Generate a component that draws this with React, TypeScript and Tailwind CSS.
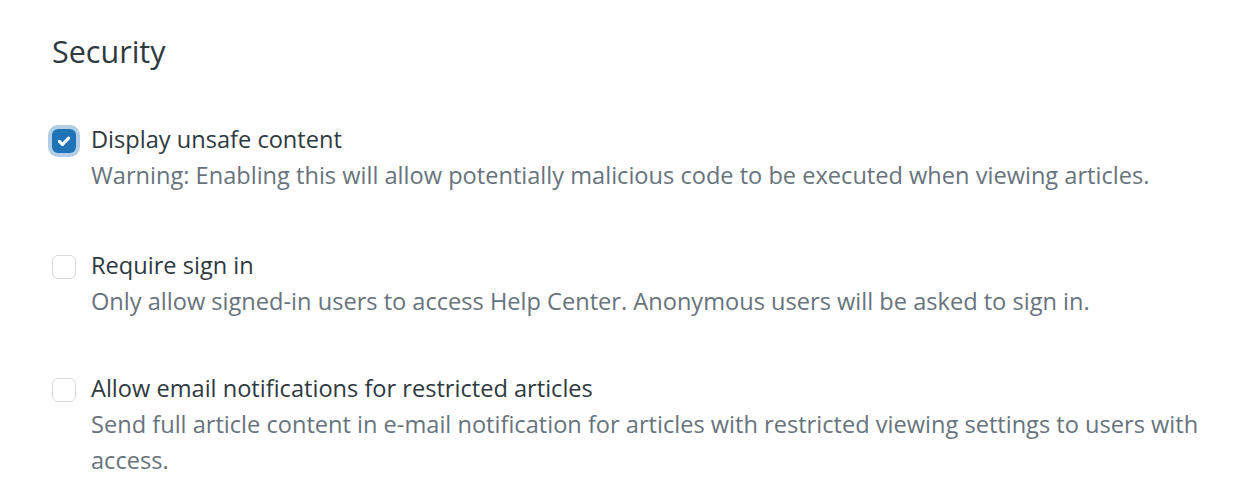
type Setting = {
  id: string;
  label: string;
  hint: string;
  checked: boolean;
  spacing: string;
};

const settings: Setting[] = [
  {
    id: "unsafe-content",
    label: "Display unsafe content",
    hint: "Warning: Enabling this will allow potentially malicious code to be executed when viewing articles.",
    checked: true,
    spacing: "mt-[49px]",
  },
  {
    id: "require-sign-in",
    label: "Require sign in",
    hint: "Only allow signed-in users to access Help Center. Anonymous users will be asked to sign in.",
    checked: false,
    spacing: "mt-[54px]",
  },
  {
    id: "restricted-notifications",
    label: "Allow email notifications for restricted articles",
    hint: "Send full article content in e-mail notification for articles with restricted viewing settings to users with access.",
    checked: false,
    spacing: "mt-[51px]",
  },
];

function CheckBox({ checked }: { checked: boolean }) {
  if (checked) {
    return (
      <span className="mt-[8px] flex h-[24px] w-[24px] shrink-0 items-center justify-center rounded-[6px] bg-[#1f73b7] shadow-[0_0_0_4px_rgba(31,115,183,0.35)]">
        <svg width="20" height="20" viewBox="0 0 12 12" fill="none">
          <path
            d="M3.2 6.2l1.9 1.9 3.7-3.8"
            stroke="#fff"
            strokeWidth="1.9"
            strokeLinecap="round"
            strokeLinejoin="round"
          />
        </svg>
      </span>
    );
  }
  return (
    <span className="mt-[8px] h-[24px] w-[24px] shrink-0 rounded-[6px] border-[1.5px] border-[#d8dcde] bg-white" />
  );
}

export default function App() {
  return (
    <div className="min-h-screen bg-white pl-[52px] pr-[20px] pt-[30px] font-['Open_Sans',sans-serif] text-[#2f3941]">
      <h2 className="text-[30.5px] leading-[42px] font-normal">Security</h2>
      <div className="flex flex-col">
        {settings.map((s) => (
          <label key={s.id} className={`flex gap-[15px] ${s.spacing}`}>
            <CheckBox checked={s.checked} />
            <div className="flex flex-col">
              <span className="text-[23.6px] leading-[36px]">{s.label}</span>
              <span className="text-[23.6px] leading-[36px] text-[#68737d]">
                {s.hint}
              </span>
            </div>
          </label>
        ))}
      </div>
    </div>
  );
}
